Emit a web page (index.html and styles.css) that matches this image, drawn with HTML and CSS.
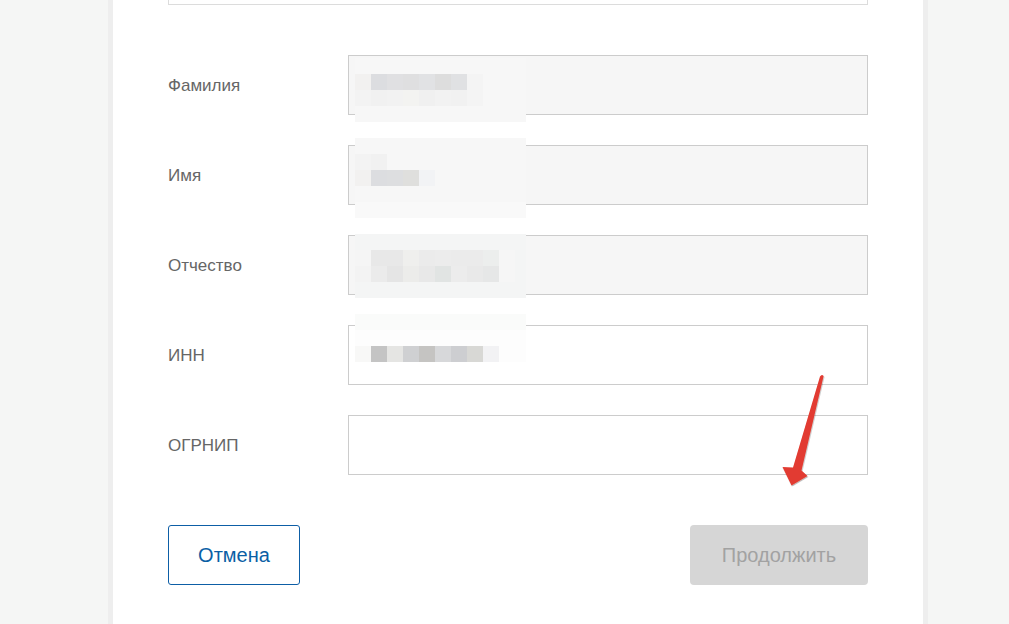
FILE: index.html
```html
<!DOCTYPE html>
<html lang="ru">
<head>
<meta charset="utf-8">
<title>Форма</title>
<link rel="stylesheet" href="styles.css">
</head>
<body>
<div class="page">
  <div class="card">
    <div class="prev-field"></div>
    <div class="form">
      <div class="row">
        <label class="label">Фамилия</label>
        <div class="field disabled">
          <div class="blur b-fam">
            <div class="brow"><i class="p0"></i><i class="p0"></i><i class="p0"></i><i class="p0"></i><i class="p0"></i><i class="p0"></i><i class="p0"></i><i class="p0"></i><i class="p0"></i><i class="p0"></i><i class="p0"></i></div>
            <div class="brow"><i style="background:#f2f1f0"></i><i style="background:#dcdde0"></i><i style="background:#e0e0e2"></i><i style="background:#dfdfe0"></i><i style="background:#e1e2e4"></i><i style="background:#dddddd"></i><i style="background:#e0e1e3"></i><i style="background:#f4f4f4"></i><i class="p0"></i><i class="p0"></i><i class="p0"></i></div>
            <div class="brow"><i style="background:#f3f3f3"></i><i style="background:#f1f1f1"></i><i style="background:#f2f2f2"></i><i style="background:#f3f3f1"></i><i style="background:#f0f0f0"></i><i style="background:#f2f2f2"></i><i style="background:#f1f1f1"></i><i style="background:#f4f4f4"></i><i class="p0"></i><i class="p0"></i><i class="p0"></i></div>
            <div class="brow"><i class="p0"></i><i class="p0"></i><i class="p0"></i><i class="p0"></i><i class="p0"></i><i class="p0"></i><i class="p0"></i><i class="p0"></i><i class="p0"></i><i class="p0"></i><i class="p0"></i></div>
          </div>
        </div>
      </div>
      <div class="row">
        <label class="label">Имя</label>
        <div class="field disabled">
          <div class="blur b-name">
            <div class="brow"><i class="p0"></i><i class="p0"></i><i class="p0"></i><i class="p0"></i><i class="p0"></i><i class="p0"></i><i class="p0"></i><i class="p0"></i><i class="p0"></i><i class="p0"></i><i class="p0"></i></div>
            <div class="brow"><i style="background:#f3f3f3"></i><i style="background:#f1f1f1"></i><i class="p0"></i><i class="p0"></i><i class="p0"></i><i class="p0"></i><i class="p0"></i><i class="p0"></i><i class="p0"></i><i class="p0"></i><i class="p0"></i></div>
            <div class="brow"><i style="background:#f2f1f0"></i><i style="background:#dcdde0"></i><i style="background:#dddee0"></i><i style="background:#dfdfdd"></i><i style="background:#f2f3f5"></i><i class="p0"></i><i class="p0"></i><i class="p0"></i><i class="p0"></i><i class="p0"></i><i class="p0"></i></div>
            <div class="brow"><i class="p0"></i><i class="p0"></i><i class="p0"></i><i class="p0"></i><i class="p0"></i><i class="p0"></i><i class="p0"></i><i class="p0"></i><i class="p0"></i><i class="p0"></i><i class="p0"></i></div>
            <div class="brow"><i class="p1"></i><i class="p1"></i><i class="p1"></i><i class="p1"></i><i class="p1"></i><i class="p1"></i><i class="p1"></i><i class="p1"></i><i class="p1"></i><i class="p1"></i><i class="p1"></i></div>
          </div>
        </div>
      </div>
      <div class="row">
        <label class="label">Отчество</label>
        <div class="field disabled">
          <div class="blur b-pat">
            <div class="brow"><i class="p2"></i><i class="p2"></i><i class="p2"></i><i class="p2"></i><i class="p2"></i><i class="p2"></i><i class="p2"></i><i class="p2"></i><i class="p2"></i><i class="p2"></i><i class="p2"></i></div>
            <div class="brow"><i style="background:#f5f5f5"></i><i style="background:#e8e8e8"></i><i style="background:#e8e8e8"></i><i style="background:#efefed"></i><i style="background:#ebebeb"></i><i style="background:#ececec"></i><i style="background:#ebebeb"></i><i style="background:#ebebeb"></i><i style="background:#eceeed"></i><i style="background:#f6f6f6"></i><i class="p2"></i></div>
            <div class="brow"><i style="background:#f3f3f3"></i><i style="background:#ebebeb"></i><i style="background:#e5e5e5"></i><i style="background:#ececea"></i><i style="background:#e8e8e8"></i><i style="background:#e1e4e3"></i><i style="background:#ececec"></i><i style="background:#e9e9e9"></i><i style="background:#e6e7e7"></i><i style="background:#f6f6f6"></i><i class="p2"></i></div>
            <div class="brow"><i class="p2"></i><i class="p2"></i><i class="p2"></i><i class="p2"></i><i class="p2"></i><i class="p2"></i><i class="p2"></i><i class="p2"></i><i class="p2"></i><i class="p2"></i><i class="p2"></i></div>
          </div>
        </div>
      </div>
      <div class="row">
        <label class="label">ИНН</label>
        <div class="field">
          <div class="blur b-inn">
            <div class="brow"><i class="p3"></i><i class="p3"></i><i class="p3"></i><i class="p3"></i><i class="p3"></i><i class="p3"></i><i class="p3"></i><i class="p3"></i><i class="p3"></i><i class="p3"></i><i class="p3"></i></div>
            <div class="brow"><i class="p4"></i><i class="p4"></i><i class="p4"></i><i class="p4"></i><i class="p4"></i><i class="p4"></i><i class="p4"></i><i class="p4"></i><i class="p4"></i><i class="p4"></i><i class="p4"></i></div>
            <div class="brow"><i style="background:#f8f8f7"></i><i style="background:#c4c4c4"></i><i style="background:#e5e5e3"></i><i style="background:#cfd0d2"></i><i style="background:#c5c4c2"></i><i style="background:#d7d8da"></i><i style="background:#cdced1"></i><i style="background:#d8d8d5"></i><i style="background:#f2f2f4"></i><i class="p4"></i><i class="p4"></i></div>
          </div>
        </div>
      </div>
      <div class="row">
        <label class="label">ОГРНИП</label>
        <div class="field"></div>
      </div>
    </div>
    <div class="actions">
      <button class="btn btn-cancel" type="button">Отмена</button>
      <button class="btn btn-next" type="button" disabled>Продолжить</button>
    </div>
    <svg class="arrow" width="60" height="122" viewBox="0 0 60 122" xmlns="http://www.w3.org/2000/svg">
      <defs>
        <filter id="sh" x="-30%" y="-10%" width="160%" height="130%">
          <feDropShadow dx="0.6" dy="1" stdDeviation="0.7" flood-color="#000" flood-opacity="0.3"/>
        </filter>
      </defs>
      <path filter="url(#sh)" fill="#e23b30" d="M50 6.5 Q51.8 3.6 53.6 6 L31.5 100.5 L37.5 106 L21.5 115.5 L12.5 97 L23 97.5 Z"/>
    </svg>
  </div>
</div>
</body>
</html>
```

FILE: styles.css
```css
* { box-sizing: border-box; }
html, body { margin: 0; padding: 0; }
body {
  background: #f5f6f5;
  font-family: "Liberation Sans", Arial, sans-serif;
  height: 624px;
  overflow: hidden;
}
.page {
  padding-left: 108px;
}
.card {
  position: relative;
  width: 820px;
  height: 624px;
  background: #ffffff;
  border-left: 5px solid #eeeeee;
  border-right: 5px solid #eeeeee;
  padding: 0 55px;
}
.prev-field {
  height: 5px;
  border: 1px solid #dcdcdc;
  border-top: none;
}
.form {
  margin-top: 50px;
  display: flex;
  flex-direction: column;
  gap: 30px;
}
.row {
  display: grid;
  grid-template-columns: 180px 1fr;
  align-items: center;
  height: 60px;
}
.label {
  font-size: 17px;
  color: #666666;
  padding-top: 1px;
}
.field {
  position: relative;
  height: 60px;
  border: 1px solid #cccccc;
  background: #ffffff;
}
.field.disabled {
  background: #f6f6f6;
}
.blur {
  position: absolute;
  left: 6px;
  width: 171px;
  overflow: hidden;
  display: flex;
  flex-direction: column;
}
.b-fam { top: 2px; }
.b-name { top: -8px; }
.b-pat { top: -2px; }
.b-inn { top: -12px; }
.brow {
  display: flex;
  height: 16px;
  flex: none;
}
.brow i {
  display: block;
  flex: none;
  width: 16px;
  height: 16px;
}
.p0 { background: #f7f7f7; }
.p1 { background: #f9f9f9; }
.p2 { background: #f4f5f5; }
.p3 { background: #fafbfa; }
.p4 { background: #fdfdfd; }
.actions {
  margin-top: 50px;
  display: flex;
  justify-content: space-between;
}
.btn {
  height: 60px;
  font-family: "Liberation Sans", Arial, sans-serif;
  font-size: 20px;
  border-radius: 3px;
  padding: 0;
}
.btn-cancel {
  width: 132px;
  background: #ffffff;
  border: 1px solid #0d5ea6;
  color: #0b5fa5;
}
.btn-next {
  width: 178px;
  background: #d6d6d6;
  border: none;
  color: #a2a2a2;
  border-radius: 4px;
}
.arrow {
  position: absolute;
  left: 657px;
  top: 370px;
  overflow: visible;
}
```
